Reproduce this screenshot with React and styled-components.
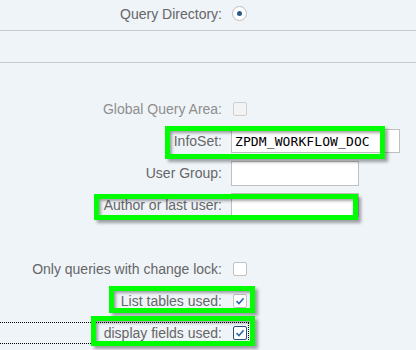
import React from "react";
import styled, { createGlobalStyle, css } from "styled-components";

const Global = createGlobalStyle`
  html, body { margin: 0; padding: 0; background: #eff4f9; }
  * { box-sizing: border-box; }
`;

const Page = styled.div`
  position: relative;
  width: 416px;
  height: 350px;
  overflow: hidden;
  background: #eff4f9;
  font-family: "Liberation Sans", Arial, sans-serif;
  font-size: 14px;
  color: #666666;
`;

const Row = styled.div`
  display: grid;
  grid-template-columns: 222px auto;
  column-gap: 9px;
  justify-content: start;
  align-items: center;
  height: 32px;
`;

const TopRow = styled(Row)`
  height: 30px;
  padding-bottom: 3px;
`;

const Band = styled.div`
  height: 33px;
  border-top: 1px solid #cacaca;
  border-bottom: 1px solid #cacaca;
`;

const Form = styled.div`
  padding-top: 30px;
`;

const Label = styled.span`
  text-align: right;
  white-space: nowrap;
  color: ${(p) => (p.$disabled ? "#8e8e8e" : "#666666")};
`;

const FocusFrame = styled(Row)`
  height: 22px;
  width: 249px;
  margin: 5px 0;
  border: 1px dotted #000;
  border-left: none;
`;

const Input = styled.div`
  width: ${(p) => p.$w}px;
  height: ${(p) => p.$h || 25}px;
  background: #ffffff;
  border: 1px solid #bfbfbf;
  display: flex;
  align-items: center;
  padding-left: 3px;
  font-family: "DejaVu Sans Mono", "Liberation Mono", monospace;
  font-size: 13px;
  color: #000;
  letter-spacing: 0.1px;
`;

const Box = styled.span`
  display: inline-flex;
  align-items: center;
  justify-content: center;
  width: 14px;
  height: 14px;
  margin-left: 2px;
  border-radius: 2px;
  background: #ffffff;
  border: 1px solid #c2c2c2;
  ${(p) =>
    p.$disabled &&
    css`
      background: #f3f3f3;
      border-color: #cfcfcf;
    `}
  ${(p) =>
    p.$focus &&
    css`
      border-color: #2b4f7c;
    `}
`;

const Radio = styled.span`
  display: inline-flex;
  align-items: center;
  justify-content: center;
  width: 15px;
  height: 15px;
  margin-left: 1px;
  border-radius: 50%;
  background: #fff;
  border: 1px solid #bdbdbd;
  &::after {
    content: "";
    width: 5px;
    height: 5px;
    border-radius: 50%;
    background: #2a5a8a;
  }
`;

const Highlight = styled.div`
  position: absolute;
  left: ${(p) => p.$x}px;
  top: ${(p) => p.$y}px;
  width: ${(p) => p.$w}px;
  height: ${(p) => p.$h}px;
  border: 5px solid #00ff00;
  box-shadow: 3px 3px 3px rgba(0, 0, 0, 0.35),
    inset 2px 2px 3px rgba(0, 0, 0, 0.35);
  pointer-events: none;
`;

const Check = () => (
  <svg width="10" height="10" viewBox="0 0 10 10">
    <polyline
      points="1.5,5.2 4,7.6 8.6,2.2"
      fill="none"
      stroke="#2f6aa8"
      strokeWidth="1.6"
    />
  </svg>
);

export default function App() {
  return (
    <Page>
      <Global />
      <TopRow>
        <Label>Query Directory:</Label>
        <Radio />
      </TopRow>
      <Band />
      <Form>
        <Row>
          <Label $disabled>Global Query Area:</Label>
          <Box $disabled />
        </Row>
        <Row>
          <Label>InfoSet:</Label>
          <Input $w={169} $h={24}>ZPDM_WORKFLOW_DOC</Input>
        </Row>
        <Row>
          <Label>User Group:</Label>
          <Input $w={128} />
        </Row>
        <Row>
          <Label>Author or last user:</Label>
          <Input $w={128} $h={24} />
        </Row>
        <Row />
        <Row>
          <Label>Only queries with change lock:</Label>
          <Box />
        </Row>
        <Row>
          <Label>List tables used:</Label>
          <Box>
            <Check />
          </Box>
        </Row>
        <FocusFrame>
          <Label>display fields used:</Label>
          <Box $focus>
            <Check />
          </Box>
        </FocusFrame>
      </Form>
      <Highlight $x={165} $y={126} $w={220} $h={33} />
      <Highlight $x={94} $y={194} $w={264} $h={26} />
      <Highlight $x={109} $y={286} $w={146} $h={27} />
      <Highlight $x={91} $y={316} $w={164} $h={30} />
    </Page>
  );
}
